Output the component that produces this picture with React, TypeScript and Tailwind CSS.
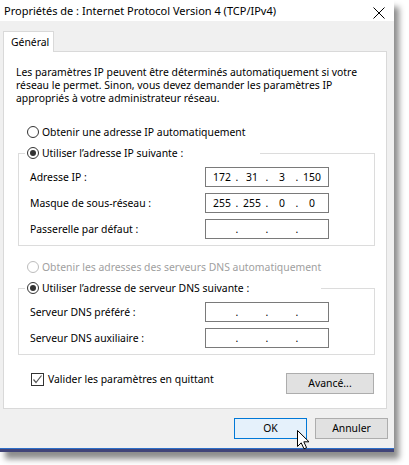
import type { ReactNode } from "react";

// Boîte de dialogue « Propriétés IPv4 » façon Windows 10.

function Radio({ checked, disabled }: { checked?: boolean; disabled?: boolean }) {
  return (
    <span
      className={`flex h-[12px] w-[12px] shrink-0 items-center justify-center rounded-full border bg-white ${
        disabled ? "border-[#bcbcbc]" : "border-[#333333]"
      }`}
    >
      {checked && <span className="h-[6px] w-[6px] rounded-full bg-[#333333]" />}
    </span>
  );
}

function RadioLine({
  label,
  checked,
  disabled,
}: {
  label: string;
  checked?: boolean;
  disabled?: boolean;
}) {
  return (
    <div className="flex h-[14px] items-center gap-[3px]">
      <Radio checked={checked} disabled={disabled} />
      <span className={disabled ? "text-[#a0a0a0]" : "text-black"}>{label}</span>
    </div>
  );
}

function IpBox({ value }: { value?: string[] }) {
  const parts = value ?? ["", "", "", ""];
  return (
    <div className="flex h-[20px] w-[124px] items-center border border-[#7a7a7a] bg-white pl-[3px]">
      {parts.map((p, i) => (
        <div key={i} className="flex items-center">
          {i > 0 && <span className="w-[4px] text-center">.</span>}
          <span className="w-[26px] text-center">{p}</span>
        </div>
      ))}
    </div>
  );
}

function Row({ label, value }: { label: string; value?: string[] }) {
  return (
    <div className="flex h-[20px] items-center">
      <span className="w-[175px]">{label}</span>
      <IpBox value={value} />
    </div>
  );
}

function Group({
  legendWidth,
  legend,
  children,
}: {
  legendWidth: string;
  legend: ReactNode;
  children: ReactNode;
}) {
  return (
    <fieldset className="border border-[#dcdcdc] px-[11px] pb-[6px]">
      <legend className={`-ml-[5px] h-[14px] ${legendWidth} pl-[2px]`}>{legend}</legend>
      <div className="mt-[7px] flex flex-col gap-[6px]">{children}</div>
    </fieldset>
  );
}

function Cursor() {
  return (
    <svg
      className="absolute left-[61px] top-[10px]"
      width="14"
      height="21"
      viewBox="0 0 14 21"
    >
      <path
        d="M1.5 1.5 L1.5 17.5 L5.2 13.8 L8 19.8 L10.6 18.7 L7.8 12.8 L13 12.8 Z"
        fill="#ffffff"
        stroke="#000000"
        strokeWidth="1"
        strokeLinejoin="miter"
      />
    </svg>
  );
}

export default function App() {
  return (
    <div className="h-[465px] w-[409px] bg-white font-['Noto_Sans','Open_Sans',sans-serif] text-[10.4px] leading-[13px] text-black">
      <div className="w-[394px] shadow-[5px_7px_6px_rgba(0,0,0,0.45)]">
        {/* Barre de titre */}
        <div className="flex h-[21px] items-center justify-between bg-white pl-[4px] pr-[9px]">
          <span className="text-[11px]">Propriétés de : Internet Protocol Version 4 (TCP/IPv4)</span>
          <svg width="12" height="12" viewBox="0 0 12 12" className="mt-[4px]">
            <path d="M0.5 0.5 L11.5 11.5 M11.5 0.5 L0.5 11.5" stroke="#000" strokeWidth="1" />
          </svg>
        </div>

        <div className="bg-[#f0f0f0] px-[3px] pt-[10px] pb-[9px]">
          {/* Onglet */}
          <div className="relative z-10 -mb-px flex h-[21px] w-[51px] items-center border border-b-0 border-[#d9d9d9] bg-white pl-[7px]">
            Général
          </div>

          {/* Panneau */}
          <div className="w-[384px] border border-[#d9d9d9] bg-white pb-[14px] pl-[14px] pr-[11px] pt-[14px]">
            <p className="-ml-[2px] whitespace-nowrap">
              Les paramètres IP peuvent être déterminés automatiquement si votre
              <br />
              réseau le permet. Sinon, vous devez demander les paramètres IP
              <br />
              appropriés à votre administrateur réseau.
            </p>

            <div className="ml-[9px] mt-[20px]">
              <RadioLine label="Obtenir une adresse IP automatiquement" />
            </div>

            <div className="mt-[7px]">
              <Group legendWidth="w-[235px]" legend={<RadioLine label="Utiliser l’adresse IP suivante :" checked />}>
                <Row label="Adresse IP :" value={["172", "31", "3", "150"]} />
                <Row label="Masque de sous-réseau :" value={["255", "255", "0", "0"]} />
                <Row label="Passerelle par défaut :" />
              </Group>
            </div>

            <div className="ml-[9px] mt-[14px]">
              <RadioLine label="Obtenir les adresses des serveurs DNS automatiquement" disabled />
            </div>

            <div className="mt-[7px]">
              <Group
                legendWidth="w-[296px]"
                legend={<RadioLine label="Utiliser l’adresse de serveur DNS suivante :" checked />}
              >
                <Row label="Serveur DNS préféré :" />
                <Row label="Serveur DNS auxiliaire :" />
              </Group>
            </div>

            <div className="mt-[18px] flex items-start justify-between">
              <div className="ml-[13px] flex h-[13px] items-center gap-[4px]">
                <span className="flex h-[13px] w-[13px] items-center justify-center border border-[#333333] bg-white">
                  <svg width="11" height="11" viewBox="0 0 11 11">
                    <path d="M1.5 5.5 L4 8.5 L9.5 1.5" fill="none" stroke="#555" strokeWidth="1.2" />
                  </svg>
                </span>
                <span>Valider les paramètres en quittant</span>
              </div>
              <button className="mr-px flex h-[21px] w-[88px] items-center justify-center border border-[#adadad] bg-[#e1e1e1]">
                Avancé...
              </button>
            </div>
          </div>

          {/* Boutons */}
          <div className="mt-[9px] flex justify-end gap-[8px] pr-[3px]">
            <button className="relative flex h-[21px] w-[73px] items-center justify-center border border-[#0078d7] bg-[#e5f1fb]">
              OK
              <Cursor />
            </button>
            <button className="flex h-[21px] w-[73px] items-center justify-center border border-[#adadad] bg-[#e1e1e1]">
              Annuler
            </button>
          </div>
        </div>

        <div className="h-px bg-[#2d6fc8]" />
        <div className="h-[3px] bg-[#414478]" />
      </div>
    </div>
  );
}
